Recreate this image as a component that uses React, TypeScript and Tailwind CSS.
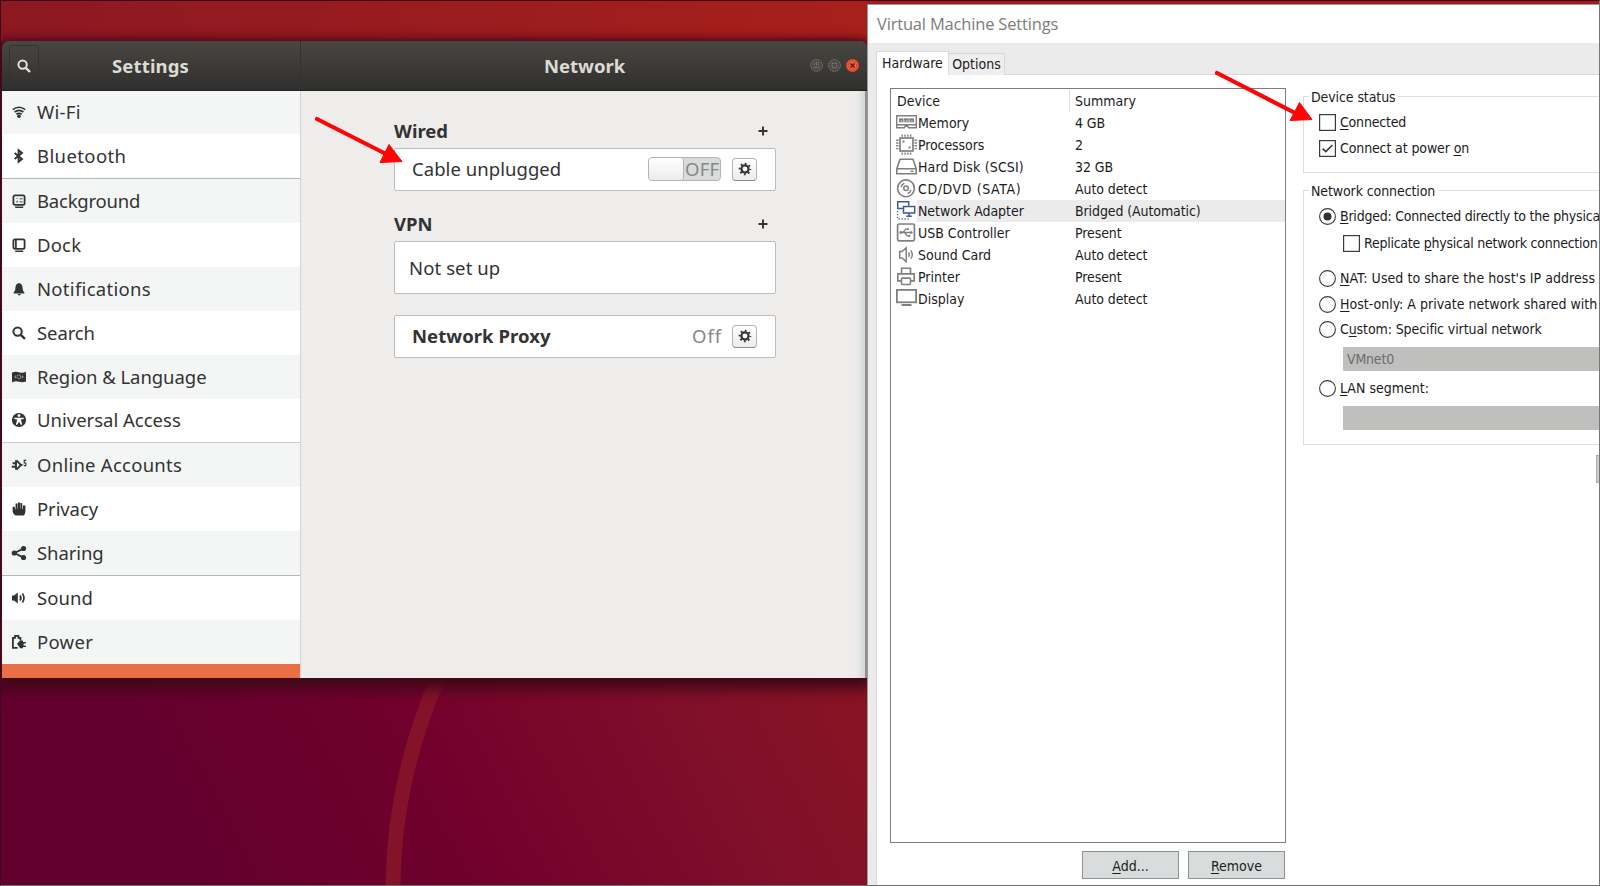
import type { ReactNode } from "react";

const ink = "#333333";

const Svg = ({ children, className = "size-4", box = "0 0 16 16" }: { children: ReactNode; className?: string; box?: string }) => (
  <svg viewBox={box} className={`${className} shrink-0`} fill="none">
    {children}
  </svg>
);

const Magnifier = ({ color = ink }: { color?: string }) => (
  <Svg>
    <circle cx="6.6" cy="6.6" r="4.2" stroke={color} strokeWidth="2" />
    <path d="M9.8 9.8L14 14" stroke={color} strokeWidth="2.4" />
  </Svg>
);

const sideIcons: Record<string, ReactNode> = {
  wifi: (
    <Svg>
      <path d="M1.8 5.6Q8 .9 14.2 5.6M3.6 8Q8 4.6 12.4 8M5.4 10.2Q8 8.4 10.6 10.2" stroke={ink} strokeWidth="1.7" />
      <circle cx="8" cy="12.3" r="1.8" fill={ink} />
    </Svg>
  ),
  bluetooth: (
    <Svg>
      <path d="M3.6 5L11 11L7.6 13.8V2.2L11 5L3.6 11" stroke={ink} strokeWidth="1.9" />
    </Svg>
  ),
  background: (
    <Svg>
      <rect x="2.4" y="2.4" width="11.2" height="9.4" rx="1.6" stroke={ink} strokeWidth="1.8" />
      <path d="M4.4 9.4L6.2 7.2L7.6 9.4ZM8.6 5h3v1.4h-3zM8.6 8h3v1.4h-3zM5.4 5h1.4v1h-1.4z" fill="#777" />
      <path d="M4.2 14.2h8" stroke={ink} strokeWidth="1.4" />
    </Svg>
  ),
  dock: (
    <Svg>
      <rect x="2.4" y="2.4" width="11.2" height="9.4" rx="1.6" stroke={ink} strokeWidth="1.8" />
      <path d="M4.9 3v8.6" stroke={ink} strokeWidth="1.7" />
      <path d="M4.2 14.2h8" stroke={ink} strokeWidth="1.4" />
    </Svg>
  ),
  bell: (
    <Svg>
      <path d="M8 2.2C5.2 2.2 4.6 4.6 4.4 7C4.2 9.6 3.6 10.4 2.6 11.6V12.4H13.4V11.6C12.4 10.4 11.8 9.6 11.6 7C11.4 4.6 10.8 2.2 8 2.2Z" fill={ink} />
      <path d="M6.6 13h3.4q-.4 1.4-1.7 1.4T6.6 13Z" fill={ink} />
    </Svg>
  ),
  search: <Magnifier />,
  region: (
    <Svg>
      <path d="M1 3.4Q4.5 2 8 3.2T15 2.8V12.6Q11.5 13.8 8 12.8T2 13L1 13.4Z" fill={ink} />
      <circle cx="8" cy="7.8" r="1.9" stroke="#c8caca" strokeWidth=".9" strokeDasharray="1.4 .6" />
      <path d="M4.6 6.6q-1 1.2 0 2.6M11.4 6.6q1 1.2 0 2.6" stroke="#c8caca" strokeWidth=".8" />
    </Svg>
  ),
  access: (
    <Svg>
      <circle cx="8" cy="8" r="7.1" fill={ink} />
      <circle cx="8" cy="3.6" r="1.4" fill="#fff" />
      <path d="M3.2 5.8H12.8V7L9.8 7.6L11.2 12.8H9.8L8 9.8L6.2 12.8H4.8L6.2 7.6L3.2 7Z" fill="#fff" />
    </Svg>
  ),
  accounts: (
    <Svg>
      <path d="M5 3.2v9.6M5.4 3.4L10 8L5.4 12.600M1.6 6.2H5M.8 9.8H5" stroke={ink} strokeWidth="1.9" />
      <path d="M10 8h2.4M15.2 3.4h-2v2.6h1.6v2.6h-1.8" stroke={ink} strokeWidth="1.1" />
    </Svg>
  ),
  hand: (
    <Svg>
      <path d="M1.6 5.8H3.6L4.6 9V2.4H6.6V7.6H7V1.4H9V7.6H9.4V2H11.2V8H11.8V4.4H14.4V10.6Q14.4 13 12.6 14.6H4.6Q1.6 13 1.6 9.6Z" fill={ink} />
    </Svg>
  ),
  share: (
    <Svg>
      <path d="M12.6 3.6L3.4 8L12.6 12.6" stroke={ink} strokeWidth="1.8" />
      <circle cx="12.5" cy="3.5" r="2.6" fill={ink} />
      <circle cx="3.3" cy="8" r="2.6" fill={ink} />
      <circle cx="12.5" cy="12.5" r="2.6" fill={ink} />
    </Svg>
  ),
  sound: (
    <Svg>
      <path d="M1 5.4H3L6.8 2.6V13.4L3 10.6H1Z" fill={ink} />
      <path d="M9 5.4Q10.8 8 9 10.6M11.4 3.6Q14.6 8 11.4 12.4" stroke={ink} strokeWidth="1.7" />
    </Svg>
  ),
  power: (
    <Svg>
      <path d="M6.6 13.8H1.9V3.8H4V1.9H7.4V3.8H9.4V6.4" stroke={ink} strokeWidth="1.8" />
      <path d="M6 9.8L9.2 6.6H12V8H14.8V9.6H12.6V11.4H14.8V13H12V14.2H9.2Z" fill={ink} />
    </Svg>
  ),
};

const rows: { icon: string; label: string; cls: string }[] = [
  { icon: "wifi", label: "Wi-Fi", cls: "h-[43px] bg-[#f4f6f6] pb-px tracking-[0.3px]" },
  { icon: "bluetooth", label: "Bluetooth", cls: "h-[45px] border-b border-[#b4b8b8] bg-white tracking-[0.4px]" },
  { icon: "background", label: "Background", cls: "h-[44px] bg-[#f4f6f6] tracking-[-0.2px]" },
  { icon: "dock", label: "Dock", cls: "h-[44px] bg-white tracking-[0.2px]" },
  { icon: "bell", label: "Notifications", cls: "h-[44px] bg-[#f4f6f6] tracking-[0.3px]" },
  { icon: "search", label: "Search", cls: "h-[44px] bg-white tracking-[-0.1px]" },
  { icon: "region", label: "Region & Language", cls: "h-[44px] bg-[#f4f6f6] tracking-[-0.05px]" },
  { icon: "access", label: "Universal Access", cls: "h-[44px] border-b border-[#c8cccc] bg-white pb-px tracking-[0px]" },
  { icon: "accounts", label: "Online Accounts", cls: "h-[44px] bg-[#f4f6f6] tracking-[0.25px]" },
  { icon: "hand", label: "Privacy", cls: "h-[44px] bg-white tracking-[-0.1px]" },
  { icon: "share", label: "Sharing", cls: "h-[45px] border-b border-[#b4b8b8] bg-[#f4f6f6] tracking-[-0.1px]" },
  { icon: "sound", label: "Sound", cls: "h-[44px] bg-white tracking-[0.1px]" },
  { icon: "power", label: "Power", cls: "h-[44px] bg-[#f4f6f6] tracking-[0.3px]" },
];

const Gear = () => (
  <span className="flex h-[23px] w-[25px] items-center justify-center rounded-[4px] border border-[#b4b4b2] border-b-[#8c8c8a] bg-linear-to-b from-white to-[#ececec]">
    <Svg className="size-[14px]">
      <circle cx="8" cy="8" r="4.1" stroke={ink} strokeWidth="2.5" />
      <circle cx="8" cy="8" r="6.1" stroke={ink} strokeWidth="2.2" strokeDasharray="2 2.79" strokeDashoffset="1" />
    </Svg>
  </span>
);

const Plus = () => (
  <Svg className="size-[10px]" box="0 0 10 10">
    <path d="M5 .5v9M.5 5h9" stroke={ink} strokeWidth="1.9" />
  </Svg>
);

const SectionTitle = ({ children }: { children: ReactNode }) => (
  <div className="flex h-[30px] items-center justify-between pr-[8px] text-[18.5px] font-bold">
    <span className="pb-px">{children}</span>
    <Plus />
  </div>
);

const LinuxSettings = () => (
  <div className="flex h-[637px] w-[865px] flex-col overflow-hidden rounded-t-[7px] font-['Noto_Sans','Open_Sans',sans-serif] text-[#333333] shadow-[0_6px_14px_5px_#400818,0_0_6px_2px_#6c0a2a]">
    <div className="flex h-[50px] shrink-0 border-b border-[#2a2023] bg-linear-to-b from-[#484640] via-[#3c3b38] to-[#2f2f2e] text-[18.5px] font-bold text-[#dedbd5]">
      <div className="flex w-[299px] items-center border-r border-[#333230]">
        <span className="ml-[7px] flex h-[42px] w-[30px] items-center justify-center rounded-[4px] border border-[#34322f]">
          <Magnifier color="#e4e2dd" />
        </span>
        <span className="ml-[73px] pt-px tracking-[0.15px]">Settings</span>
      </div>
      <div className="flex flex-1 items-center">
        <span className="ml-[243px] w-[180px] pt-px">Network</span>
        <div className="ml-[86px] flex gap-[5px]">
          <Svg className="size-[13px]" box="0 0 13 13">
            <circle cx="6.5" cy="6.5" r="5.9" fill="#4b4944" stroke="#8a8882" strokeDasharray="1 .8" />
            <path d="M3.4 8.4h6.2M4.6 3.6v3M6.5 3v3.6M8.4 3.6v3" stroke="#8a8882" strokeDasharray="1 .6" />
          </Svg>
          <Svg className="size-[13px]" box="0 0 13 13">
            <circle cx="6.5" cy="6.5" r="5.9" fill="#4b4944" stroke="#8a8882" strokeDasharray="1 .8" />
            <path d="M4.2 4.2h4.6v4.6h-4.6z" stroke="#8a8882" strokeDasharray="1 .6" />
          </Svg>
          <Svg className="size-[13px]" box="0 0 13 13">
            <circle cx="6.5" cy="6.5" r="6.2" fill="#e8603c" stroke="#e8351f" strokeWidth=".6" />
            <circle cx="6.5" cy="6.5" r="4.5" stroke="#d8200f" strokeWidth="1" strokeDasharray="1 1" />
            <path d="M4.5 4.5l4 4M8.5 4.5l-4 4" stroke="#5c1814" strokeWidth="1.3" />
          </Svg>
        </div>
      </div>
    </div>
    <div className="flex min-h-0 flex-1">
      <nav className="flex w-[299px] shrink-0 flex-col border-r border-[#d0d6d6] bg-white text-[18.5px]">
        {rows.map((r) => (
          <div key={r.label} className={`flex shrink-0 items-center gap-[10px] pl-[9px] ${r.cls}`}>
            {sideIcons[r.icon]}
            <span>{r.label}</span>
          </div>
        ))}
        <div className="flex-1 bg-[#e96f47]" />
      </nav>
      <main className="flex-1 border-r-2 border-[#8e9090] bg-[#eeedeb] pl-[93px] pt-[25px] shadow-[inset_-9px_0_7px_-5px_#cfd5d5]">
        <div className="w-[382px]">
          <SectionTitle>Wired</SectionTitle>
          <div className="mt-[2px] flex h-[43px] items-center rounded-[2px] border border-[#bcbebe] bg-white pb-px pl-[17px] pr-[18px] text-[18.5px]">
            <span className="flex-1 pb-px tracking-[0.05px]">Cable unplugged</span>
            <span className="flex h-[24px] w-[73px] overflow-hidden rounded-[4px] border border-[#b4b4b2] bg-[#d8dcdc] text-[#888886]">
              <span className="w-[35px] shrink-0 rounded-[3px] border-r border-[#b4b4b2] bg-linear-to-b from-white to-[#ececec]" />
              <span className="pl-px leading-[22px] tracking-[0.2px]">OFF</span>
            </span>
            <span className="ml-[11px] flex">
              <Gear />
            </span>
          </div>
          <div className="pt-[18px]">
            <SectionTitle>VPN</SectionTitle>
          </div>
          <div className="mt-[2px] flex h-[53px] items-center rounded-[2px] border border-[#bcbebe] bg-white pl-[14px] text-[18.5px] tracking-[0.1px]">Not set up</div>
          <div className="mt-[21px] flex h-[43px] items-center rounded-[2px] border border-[#bcbebe] bg-white pb-px pl-[17px] pr-[18px] text-[18.5px]">
            <span className="flex-1 pb-px font-bold tracking-[0.05px]">Network Proxy</span>
            <span className="mr-[10px] pb-px tracking-[0.9px] text-[#888886]">Off</span>
            <Gear />
          </div>
        </div>
      </main>
    </div>
  </div>
);

const g = "#808080";
const deviceIcons: Record<string, ReactNode> = {
  memory: (
    <Svg className="h-[22px] w-[21px]" box="0 0 21 22">
      <path d="M.7 3.7h19.6v9H.7zM.7 12.7v3h7.6l1-1.4h2.4l1 1.4h7.6v-3" stroke={g} strokeWidth="1.5" />
      <path d="M3 6.3h15v4h-15z" fill={g} />
      <path d="M7.5 6v3.5M13 6v3.5M4.5 9h12" stroke="#fff" strokeWidth=".8" strokeDasharray="1.5 1.2" />
    </Svg>
  ),
  cpu: (
    <Svg className="h-[22px] w-[21px]" box="0 0 21 22">
      <rect x="4" y="4" width="13" height="13" stroke={g} strokeWidth="1.7" />
      <path d="M5.5 1.6h10.5M5.5 19.6h10.5" stroke={g} strokeWidth="2.4" strokeDasharray="1.4 1.4" />
      <path d="M1.3 5.5v10.5M19.7 5.5v10.5" stroke={g} strokeWidth="2.4" strokeDasharray="1.4 1.4" />
      <path d="M6.5 6.5h2v2h-2zM12.6 12.5h2v2h-2z" fill={g} />
    </Svg>
  ),
  disk: (
    <Svg className="h-[22px] w-[21px]" box="0 0 21 22">
      <path d="M.8 12.7L4 3.2H17L20.2 12.7V17.8H.8ZM.8 12.7H20.2" stroke={g} strokeWidth="1.6" />
      <path d="M14.5 15.3h3" stroke={g} strokeWidth="1.5" />
    </Svg>
  ),
  disc: (
    <Svg className="h-[22px] w-[21px]" box="0 0 21 22">
      <circle cx="10" cy="10.3" r="8.4" stroke={g} strokeWidth="1.6" />
      <circle cx="10" cy="10.3" r="2.3" stroke={g} strokeWidth="1.5" />
      <path d="M5 9Q5.6 6.2 8.4 5.2M15 11.8Q14.4 14.6 11.6 15.5" stroke={g} strokeWidth="1.5" />
    </Svg>
  ),
  net: (
    <Svg className="h-[22px] w-[21px]" box="0 0 21 22">
      <path d="M6.8 8.6H1.7V1.7h11v4" stroke="#3d5c92" strokeWidth="1.5" />
      <path d="M7.5 6.5h11.2v6.6H7.5zM13 13.1v3M10.4 16.2h5.4" stroke="#3d5c92" strokeWidth="1.5" />
      <path d="M1.5 11v8h11" stroke="#3d5c92" strokeWidth="1.3" strokeDasharray="1.2 1.8" />
    </Svg>
  ),
  usb: (
    <Svg className="h-[22px] w-[21px]" box="0 0 21 22">
      <rect x="1.6" y="2" width="16.8" height="16.8" rx="1.5" stroke={g} strokeWidth="1.7" />
      <path d="M4 10.5h11.5M7 10.5l2.6-3.4h2M8.6 10.5l2.6 3.4h2" stroke={g} strokeWidth="1.3" />
      <path d="M14.6 8.5l2.4 2-2.4 2z" fill={g} />
      <circle cx="4.8" cy="10.5" r="1.4" fill={g} />
      <circle cx="12" cy="7.1" r="1.1" fill={g} />
      <circle cx="13.4" cy="13.9" r="1.1" fill={g} />
    </Svg>
  ),
  speaker: (
    <Svg className="h-[22px] w-[21px]" box="0 0 21 22">
      <path d="M3.7 7.5H6L10.2 3.8V17.5L6 13.9H3.7Z" stroke={g} strokeWidth="1.5" />
      <path d="M12.6 8.3q1.4 2.2 0 4.6M14.8 6.3q3 4.2 0 8.4" stroke={g} strokeWidth="1.4" />
    </Svg>
  ),
  printer: (
    <Svg className="h-[22px] w-[21px]" box="0 0 21 22">
      <path d="M5.5 7.8V2.2h9v5.6M5.5 14.9H1.8V7.9H18.2v7H14.5" stroke={g} strokeWidth="1.6" />
      <rect x="5.5" y="12.1" width="9" height="6.4" rx="1" stroke={g} strokeWidth="1.6" />
    </Svg>
  ),
  display: (
    <Svg className="h-[22px] w-[21px]" box="0 0 21 22">
      <rect x=".9" y="1.9" width="19.2" height="12.4" stroke={g} strokeWidth="1.8" />
      <path d="M5.5 17h10" stroke={g} strokeWidth="2" />
    </Svg>
  ),
};

const devices: [string, string, string][] = [
  ["memory", "Memory", "4 GB"],
  ["cpu", "Processors", "2"],
  ["disk", "Hard Disk (SCSI)", "32 GB"],
  ["disc", "CD/DVD (SATA)", "Auto detect"],
  ["net", "Network Adapter", "Bridged (Automatic)"],
  ["usb", "USB Controller", "Present"],
  ["speaker", "Sound Card", "Auto detect"],
  ["printer", "Printer", "Present"],
  ["display", "Display", "Auto detect"],
];

const nameTracking: Record<string, string> = {
  cpu: "tracking-[-0.1px]",
  disk: "tracking-[0.15px]",
  disc: "tracking-[0.6px]",
  net: "tracking-[-0.05px]",
};

const Key = ({ children }: { children: ReactNode }) => <span className="underline decoration-1 underline-offset-2">{children}</span>;

const Option = ({ kind, on = false, className = "", children }: { kind: "check" | "radio"; on?: boolean; className?: string; children: ReactNode }) => (
  <div className={`flex h-[18px] items-center gap-[4px] whitespace-nowrap ${className}`}>
    <Svg className="size-[17px]" box="0 0 17 17">
      {kind === "check" ? (
        <rect x=".6" y=".6" width="15.8" height="15.8" stroke="#3c3c3c" strokeWidth="1.2" fill="#fff" />
      ) : (
        <circle cx="8.5" cy="8.5" r="7.9" stroke="#3c3c3c" strokeWidth="1.1" fill="#fff" />
      )}
      {on && kind === "check" && <path d="M3.6 8.6L6.8 11.6L13.4 5" stroke="#333" strokeWidth="1.5" />}
      {on && kind === "radio" && <circle cx="8.5" cy="8.5" r="4" fill="#333" />}
    </Svg>
    <span>{children}</span>
  </div>
);

const Group = ({ title, className, children }: { title: string; className: string; children: ReactNode }) => (
  <section className={`flex flex-col border border-r-0 border-[#dcdfdf] pl-[15px] ${className}`}>
    <div className="-ml-[10px] -mt-[9px] h-[18px] self-start whitespace-nowrap bg-white pl-[2px] pr-[3px] leading-[18px] tracking-[-0.1px]">{title}</div>
    {children}
  </section>
);

const VmSettings = () => (
  <div className="mt-[4px] flex h-[882px] w-[733px] flex-col overflow-hidden border-l border-t border-[#9a9a9a] bg-[#ebebeb] font-['DejaVu_Sans_Condensed','DejaVu_Sans',sans-serif] text-[14px] text-[#1c1c1c] [font-stretch:condensed]">
    <div className="flex h-[38px] shrink-0 items-center bg-white pl-[9px] font-['Open_Sans','Noto_Sans',sans-serif] text-[16.5px] tracking-[-0.18px] text-[#7c7c7c] [font-stretch:normal]">Virtual Machine Settings</div>
    <div className="flex h-[32px] shrink-0 items-end pl-[8px]">
      <div className="flex h-[24px] w-[73px] items-center justify-center border-x border-t border-[#d5d9d9] bg-white pb-px">Hardware</div>
      <div className="flex h-[22px] w-[56px] items-center justify-center border-r border-t border-[#d5d9d9] bg-[#eeeeee]">Options</div>
      <div className="h-px flex-1 bg-[#d5d9d9]" />
    </div>
    <div className="ml-[8px] flex flex-1 border-l border-[#d8dcdc] bg-white">
      <div className="ml-[13px] mt-[13px] flex w-[396px] shrink-0 flex-col">
        <div className="h-[755px] border border-[#7d7d7d] pt-px">
          <div className="flex h-[22px] items-center">
            <span className="flex h-full w-[179px] items-center border-r border-[#dcdcdc] pl-[6px]">Device</span>
            <span className="pl-[5px]">Summary</span>
          </div>
          {devices.map(([icon, name, summary]) => (
            <div key={name} className="flex h-[22px] items-center pl-[5px]">
              {deviceIcons[icon]}
              <div className={`flex h-full flex-1 items-center ${icon === "net" ? "bg-[#ebebeb]" : ""}`}>
                <span className={`w-[158px] whitespace-nowrap pl-px ${nameTracking[icon] ?? ""}`}>{name}</span>
                <span className="tracking-[-0.1px]">{summary}</span>
              </div>
            </div>
          ))}
        </div>
        <div className="mt-[8px] flex justify-end gap-[9px] pr-px">
          <div className="flex h-[28px] w-[97px] items-center justify-center border border-[#8f9191] bg-[#d8dcdc] pt-[2px]">
            <span>
              <Key>A</Key>dd...
            </span>
          </div>
          <div className="flex h-[28px] w-[97px] items-center justify-center border border-[#8f9191] bg-[#d8dcdc] pt-[2px]">
            <span>
              <Key>R</Key>emove
            </span>
          </div>
        </div>
      </div>
      <div className="ml-[17px] flex flex-1 flex-col pt-[21px]">
        <Group title="Device status" className="h-[77px] pl-[14px]">
          <Option kind="check" className="mt-[7px] tracking-[-0.2px]">
            <Key>C</Key>onnected
          </Option>
          <Option kind="check" on className="mt-[8px] tracking-[-0.12px]">
            Connect at power <Key>o</Key>n
          </Option>
        </Group>
        <Group title="Network connection" className="mt-[17px] h-[255px] pl-[14px]">
          <Option kind="radio" on className="mt-[7px] tracking-[-0.23px]">
            <Key>B</Key>ridged: Connected directly to the physica
          </Option>
          <Option kind="check" className="ml-[24px] mt-[9px] tracking-[-0.24px]">
            Replicate <Key>p</Key>hysical network connection
          </Option>
          <Option kind="radio" className="mt-[17px] tracking-[0.05px]">
            <Key>N</Key>AT: Used to share the host's IP address
          </Option>
          <Option kind="radio" className="mt-[8px]">
            <Key>H</Key>ost-only: A private network shared with
          </Option>
          <Option kind="radio" className="mt-[7px] tracking-[-0.1px]">
            C<Key>u</Key>stom: Specific virtual network
          </Option>
          <div className="ml-[24px] mt-[9px] flex h-[24px] items-center bg-[#bfbfbe] pl-[4px] tracking-[-0.2px] text-[#6d6d6d]">VMnet0</div>
          <Option kind="radio" className="mt-[8px]">
            <Key>L</Key>AN segment:
          </Option>
          <div className="ml-[24px] mt-[9px] h-[24px] shrink-0 bg-[#bfbfbe]" />
        </Group>
        <div className="mt-[10px] h-[28px] w-[4px] self-end border border-[#a9abab] bg-[#c8cccc]" />
      </div>
    </div>
  </div>
);

export default function App() {
  return (
    <div className="relative flex h-[886px] w-[1600px] overflow-hidden bg-[#a01c1c]">
      <div className="relative h-full w-[867px] shrink-0 overflow-hidden bg-[linear-gradient(62deg,#62002e_14%,#70002c_36%,#800f2a_58%,#8a1422_74%,#a8201a_100%)]">
        <svg viewBox="0 0 867 886" className="absolute inset-0 size-full" fill="none">
          <path d="M438 678Q394 780 393 886" stroke="#841228" strokeWidth="15" />
        </svg>
        <div className="absolute inset-x-0 top-0 h-[41px] bg-linear-to-r from-[#8c1822] to-[#a8201a]" />
        <div className="relative pl-[2px] pt-[41px]">
          <LinuxSettings />
        </div>
      </div>
      <VmSettings />
      <svg viewBox="0 0 1600 886" className="pointer-events-none absolute inset-0 size-full" fill="none">
        <path d="M317 119L388 155M1217 73L1297 114" stroke="#fe0505" strokeWidth="4.2" strokeLinecap="round" />
        <path d="M402 161.5L389 144.5L380 162.5ZM1312 119.5L1299.5 102.5L1290 120.5Z" fill="#fe0505" stroke="#fe0505" strokeLinejoin="round" />
      </svg>
      <div className="pointer-events-none absolute inset-0 border border-b-[#6e6e6e] border-l-[#400818] border-r-[#777777] border-t-[#400818]" />
    </div>
  );
}
